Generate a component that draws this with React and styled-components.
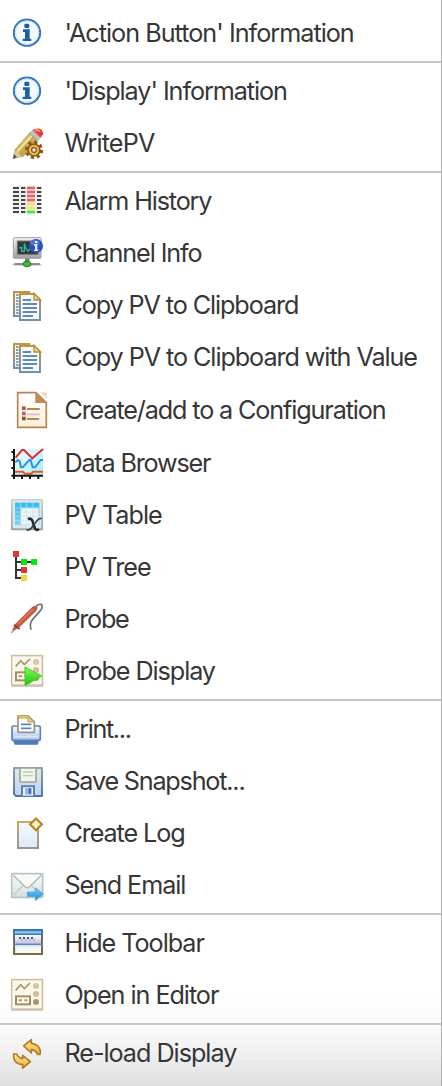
import React from 'react';
import styled, { createGlobalStyle } from 'styled-components';

const GlobalStyle = createGlobalStyle`
  body { margin: 0; background: #fff; }
`;

const Menu = styled.nav`
  box-sizing: border-box;
  width: 442px;
  height: 1086px;
  padding-top: 7px;
  overflow: hidden;
  border-right: 1px solid #afafaf;
  background: linear-gradient(#fff 0, #fff 985px, #fcfcfc 1020px, #f8f8f8 1032px, #efefef 1056px, #dfdfdf 1086px);
  font-family: Inter, "Liberation Sans", sans-serif;
  font-size: 25.2px;
  color: #363636;
`;

const Item = styled.div`
  display: flex;
  align-items: center;
  height: ${(p) => p.$height || 52}px;
  padding-left: 8px;
`;

const Icon = styled.svg`
  flex: none;
  width: 40px;
  height: 36px;
  margin-right: 16.4px;
  overflow: visible;
`;

const Label = styled.span`
  white-space: nowrap;
  line-height: 32px;
  letter-spacing: ${(p) => p.$tracking}px;
`;

const Separator = styled.hr`
  height: 2px;
  margin: 2px 0;
  border: 0;
  background: #c5c5c5;
`;

const Gradient = ({ id, from, to, diagonal }) => (
  <linearGradient id={id} x1="0" y1="0" x2={diagonal ? 1 : 0} y2="1">
    <stop stopColor={from} />
    <stop offset="1" stopColor={to} />
  </linearGradient>
);

const InfoIcon = () => (
  <Icon viewBox="24 45 120 108">
    <circle cx="81" cy="98" r="39.5" fill="#f3fbff" stroke="#3876b8" strokeWidth="6" />
    <circle cx="81" cy="98" r="35" fill="none" stroke="#c9e3f4" strokeWidth="3" />
    <rect x="73" y="71" width="15" height="13" rx="4" fill="#1d5fa5" />
    <path d="M69 88h20v28h5v7H68v-7h7V96h-6z" fill="#1d5fa5" />
  </Icon>
);

const PencilIcon = () => (
  <Icon viewBox="24 375 120 108">
    <Gradient id="pencil" from="#f0d979" to="#a9832b" diagonal />
    <path d="M39 476l6-27 45-51 24 20-43 50z" fill="url(#pencil)" stroke="#a58b45" strokeWidth="2" />
    <path d="M52 455l43-48" stroke="#f5e6a0" strokeWidth="6" />
    <path d="M39 476l5-25 8 4 5 6 7 9z" fill="#d9c7a0" />
    <path d="M39 476l3-14 9 10z" fill="#555" />
    <path d="M88 400l12-11 23 20-10 13z" fill="#bfc0c2" stroke="#999" strokeWidth="2" />
    <path d="M98 391q10-8 22-5q11 6 9 17l-7 10z" fill="#ee3d31" />
    <path d="M105 392q9-4 15 3" stroke="#ff9b8b" strokeWidth="5" fill="none" />
    <circle cx="102" cy="450" r="23" fill="none" stroke="#8a5714" strokeWidth="9" strokeDasharray="9.5 8.56" />
    <circle cx="102" cy="450" r="18" fill="#e9b652" stroke="#8a5714" strokeWidth="5" />
    <circle cx="102" cy="450" r="7" fill="#fff" stroke="#8a5714" strokeWidth="4" />
  </Icon>
);

const alarmRows = [50, 62, 74, 86, 98, 110, 122];
const alarmColors = ['#e06464', '#e06464', '#e06464', '#e06464', '#f0e06c', '#f0e06c', '#38f038'];

const AlarmIcon = () => (
  <Icon viewBox="24 39 120 108">
    <rect x="38" y="48" width="86" height="83" fill="#ededed" />
    {alarmRows.map((y, i) => (
      <React.Fragment key={y}>
        <path d={`M39 ${y + 4}h18M63 ${y + 4}h13M111 ${y + 4}h13`} stroke="#484644" strokeWidth="6" />
        <rect x="81" y={y} width="24" height="8" fill={alarmColors[i]} />
      </React.Fragment>
    ))}
  </Icon>
);

const ChannelIcon = () => (
  <Icon viewBox="24 195 120 108">
    <Gradient id="monitor" from="#f2f2f2" to="#9f9f9f" />
    <ellipse cx="81" cy="284" rx="45" ry="5" fill="#bdbdbd" opacity=".7" />
    <path d="M75 262h13v18H75z" fill="#777" />
    <path d="M42 282h78" stroke="#666" strokeWidth="4" />
    <rect x="40" y="203" width="83" height="62" rx="3" fill="url(#monitor)" stroke="#a0a0a0" strokeWidth="3" />
    <rect x="52" y="213" width="62" height="40" fill="#30383b" stroke="#747474" strokeWidth="3" />
    <path d="M58 234l7-2v12h8v-23l4 13 7 9 7-7" fill="none" stroke="#35b9a0" strokeWidth="4" />
    <ellipse cx="81" cy="282" rx="12" ry="8" fill="#3dbb3d" stroke="#1c8525" strokeWidth="3" />
    <circle cx="108" cy="228" r="21" fill="#2c50bd" />
    <ellipse cx="105" cy="218" rx="14" ry="8" fill="#7896e3" opacity=".55" />
    <path d="M105 213h7v6h-7zM102 222h10v17h3v4h-13v-4h3v-12h-3z" fill="#e6edff" />
  </Icon>
);

const CopyIcon = () => (
  <Icon viewBox="24 351 120 108">
    <Gradient id="copyEdge" from="#bf9744" to="#7390af" />
    <path d="M42 366h46v72H42z" fill="#f5f6f4" stroke="url(#copyEdge)" strokeWidth="6" />
    <path d="M48 375h8M48 384h8M48 393h8M48 402h8M48 411h8M48 420h8M48 429h8" stroke="#6487b7" strokeWidth="5" />
    <path d="M60 372h42l18 18v60H60z" fill="#f7faff" stroke="url(#copyEdge)" strokeWidth="6" />
    <path d="M102 370l20 20h-20z" fill="#efd38a" stroke="#b98d35" strokeWidth="4" />
    <path d="M68 390h25M68 402h43M68 414h43M68 426h43M68 438h31" stroke="#6289bd" strokeWidth="6" />
  </Icon>
);

const ConfigurationIcon = () => (
  <Icon viewBox="24 186 120 108">
    <Gradient id="configPage" from="#fff" to="#f8f1df" />
    <path d="M53 188h55l31 30v74H53z" fill="url(#configPage)" stroke="#b98350" strokeWidth="5" />
    <path d="M106 188l34 31h-34z" fill="#c18a56" />
    <path d="M120 187l21 20v-20z" fill="#eadccf" />
    <path d="M66 229h11v11H66z" fill="#ae5a45" />
    <path d="M66 245h11v11H66z" fill="#b96464" />
    <path d="M66 260h11v11H66z" fill="#91502c" />
    <path d="M83 237h34M83 267h32" stroke="#bb8451" strokeWidth="6" strokeLinecap="round" />
    <path d="M83 253h34" stroke="#e3c7c2" strokeWidth="7" strokeLinecap="round" />
  </Icon>
);

const ChartIcon = () => (
  <Icon viewBox="24 345 120 108">
    <Gradient id="plot" from="#f4ffff" to="#a3f0f6" diagonal />
    <rect x="44" y="356" width="85" height="80" fill="url(#plot)" />
    <path d="M45 425h24l5 6h20l5-6h30" fill="none" stroke="#f25217" strokeWidth="6" />
    <path d="M47 383l19-23h6l25 25 32-28" fill="none" stroke="#ee2635" strokeWidth="6" />
    <path d="M46 397l8-7 5 4 4 18h5l20-22h4l6 22h7l17-22h7" fill="none" stroke="#338ceb" strokeWidth="6" />
    <path d="M42 357v82M34 437h95M34 366h8M34 390h8M34 414h8M42 437v10M66 437v10M90 437v10M115 437v10" fill="none" stroke="#171717" strokeWidth="6" />
  </Icon>
);

const TableIcon = () => (
  <Icon viewBox="24 21 120 108">
    <Gradient id="tableFrame" from="#c6d1d1" to="#93a1a1" />
    <Gradient id="tableFill" from="#36baf3" to="#77d3fa" />
    <rect x="33" y="27" width="96" height="94" rx="3" fill="url(#tableFrame)" />
    <rect x="38" y="31" width="86" height="84" fill="#dfe8e8" />
    <rect x="45" y="38" width="73" height="67" fill="url(#tableFill)" />
    <path d="M63 54h53v50H63z" fill="#eef5f7" />
    <path d="M45 54h72M45 66h72M45 79h72M45 92h72M62 39v65M80 39v65M99 39v65" stroke="#bfe6f5" strokeWidth="2" />
    <path d="M84 88q9-6 13 4l8 24q4 7 12 1" fill="none" stroke="#252b2c" strokeWidth="8" />
    <path d="M125 86q-7-3-14 6l-17 22q-8 9-14 5" fill="none" stroke="#353b3c" strokeWidth="5" />
  </Icon>
);

const TreeIcon = () => (
  <Icon viewBox="24 177 120 108">
    <path d="M48 193v71h22M48 216h48M48 240h22" fill="none" stroke="#333" strokeWidth="6" />
    <path d="M39 183h18v18H39zM63 231h18v18H63z" fill="#dc3838" />
    <path d="M63 207h18v18H63zM93 207h18v18H93z" fill="#00ed0b" />
    <path d="M63 255h18v18H63z" fill="#efd647" />
  </Icon>
);

const ProbeIcon = () => (
  <Icon viewBox="24 333 120 108">
    <path d="M104 355q9-14 20-12q6 9-3 19l-23 26q-12 15-4 31" fill="none" stroke="#6c7171" strokeWidth="5" />
    <path d="M33 429l17-16" stroke="#aaa" strokeWidth="5" />
    <path d="M38 421l8-18 51-51q9-6 13-1t-5 14l-48 47z" fill="#c65b43" stroke="#a94735" strokeWidth="2" />
    <path d="M54 402l46-45" stroke="#d67e62" strokeWidth="4" />
    <path d="M42 405l17 12" stroke="#963b2f" strokeWidth="5" />
  </Icon>
);

const DisplayArt = () => (
  <>
    <rect x="34" y="176" width="96" height="97" rx="3" fill="#d2cdc4" />
    <rect x="35" y="179" width="92" height="88" fill="#fbf7ed" stroke="#cdbd9b" strokeWidth="4" />
    <path d="M47 211l15-17 11 12 17-17" fill="none" stroke="#aa9569" strokeWidth="5" />
    <rect x="48" y="229" width="42" height="24" fill="#fffaf0" stroke="#a68e5e" strokeWidth="6" />
    <path d="M56 241h10M73 241h9" stroke="#aa9569" strokeWidth="6" />
    <circle cx="108" cy="198" r="9" fill="#d7c6a4" />
    <circle cx="108" cy="222" r="9" fill="#d0bc95" />
    <circle cx="108" cy="246" r="9" fill="#aa9567" />
  </>
);

const DisplayIcon = () => <Icon viewBox="24 171 120 108"><DisplayArt /></Icon>;

const ProbeDisplayIcon = () => (
  <Icon viewBox="24 171 120 108">
    <Gradient id="play" from="#87fb54" to="#22bd10" />
    <DisplayArt />
    <path d="M75 213l50 27-50 29z" fill="url(#play)" stroke="#35d51b" strokeWidth="3" />
  </Icon>
);

const PrintIcon = () => (
  <Icon viewBox="24 198 120 108">
    <Gradient id="printer" from="#f7fbff" to="#a8c4ea" />
    <path d="M39 287h78l-4 12H44z" fill="#5179b7" />
    <rect x="36" y="243" width="85" height="43" rx="5" fill="url(#printer)" stroke="#5d80b4" strokeWidth="5" />
    <path d="M54 262v-49h31l18 18v31z" fill="#fff" stroke="#90958a" strokeWidth="5" />
    <path d="M54 212h29l18 19H84v-12H54z" fill="#edd37a" stroke="#c09a3c" strokeWidth="3" />
    <path d="M63 238h31M63 250h31" stroke="#6284b8" strokeWidth="5" />
    <path d="M43 275h71" stroke="#d8e6fa" strokeWidth="4" />
  </Icon>
);

const SaveIcon = () => (
  <Icon viewBox="24 354 120 108">
    <Gradient id="diskEdge" from="#93a39e" to="#4d76b6" />
    <Gradient id="disk" from="#dee9e7" to="#bed3ef" />
    <path d="M42 369h84v84H48l-6-6z" fill="url(#disk)" stroke="url(#diskEdge)" strokeWidth="6" strokeLinejoin="round" />
    <path d="M60 369h48v42H60z" fill="#f3f5e9" stroke="#9ba9a0" strokeWidth="5" />
    <path d="M69 381h30M69 392h30" stroke="#c1c9c1" strokeWidth="4" />
    <path d="M66 452v-28h36v28" fill="#f0f6ff" stroke="#5c80b6" strokeWidth="6" />
    <path d="M75 429h21v20H75z" fill="#9db9e4" />
    <path d="M89 430v16" stroke="#315fae" strokeWidth="6" />
  </Icon>
);

const LogIcon = () => (
  <Icon viewBox="24 30 120 108">
    <Gradient id="logEdge" from="#c8ac62" to="#929994" />
    <Gradient id="logPage" from="#f5faff" to="#dfe8f8" />
    <rect x="54" y="51" width="60" height="78" fill="url(#logPage)" stroke="url(#logEdge)" strokeWidth="6" />
    <path d="M108 40l18 18-18 18-18-18z" fill="#efcf84" stroke="#b08225" strokeWidth="6" />
    <path d="M108 48v20M98 58h20" stroke="#fffbe8" strokeWidth="5" />
  </Icon>
);

const MailIcon = () => (
  <Icon viewBox="24 186 120 108">
    <Gradient id="mail" from="#f9fbf9" to="#d5dfdb" />
    <Gradient id="mailArrow" from="#75caff" to="#258bd6" />
    <rect x="35" y="206" width="93" height="71" rx="2" fill="url(#mail)" stroke="#b4c5c5" strokeWidth="5" />
    <path d="M41 270l29-29M122 270l-29-29" stroke="#c1ceca" strokeWidth="4" />
    <path d="M40 211l36 35q6 5 12 0l36-35" fill="#f7faf7" stroke="#a9b9b5" strokeWidth="4" />
    <path d="M82 261h24v-13l24 19-24 20v-13H82z" fill="url(#mailArrow)" stroke="#4099dc" strokeWidth="2" />
  </Icon>
);

const ToolbarIcon = () => (
  <Icon viewBox="24 15 120 108">
    <Gradient id="toolbarEdge" from="#6267a1" to="#806a35" />
    <Gradient id="toolbarFill" from="#fff" to="#c4c4e8" />
    <rect x="42" y="30" width="84" height="72" fill="#fff" stroke="url(#toolbarEdge)" strokeWidth="6" />
    <path d="M39 27h90v18H39z" fill="#3f76b6" />
    <path d="M45 37h78" stroke="#82cceb" strokeWidth="7" />
    <path d="M45 45h78v24H45z" fill="url(#toolbarFill)" />
    <path d="M39 73h90" stroke="#777cac" strokeWidth="6" />
    <path d="M57 51h6v6h-6zM69 51h6v6h-6zM81 51h6v6h-6zM93 51h6v6h-6z" fill="#345b88" />
    <path d="M63 57h6v6h-6zM75 57h6v6h-6zM87 57h6v6h-6zM99 57h6v6h-6z" fill="#b7b9cf" />
    <path d="M45 78h78v20H45z" fill="#f3fafe" />
    <path d="M46 78h77M47 78v20" stroke="#d0e9f8" strokeWidth="4" />
  </Icon>
);

const ReloadIcon = () => (
  <Icon viewBox="24 345 120 108">
    <Gradient id="reload" from="#ffe8a3" to="#e5ae42" />
    <path d="M71 378l23-19v11q24 3 27 24l-1 9h-8q-4-12-18-14v10z" fill="url(#reload)" stroke="#b47b18" strokeWidth="5" strokeLinejoin="round" />
    <path d="M91 425l-23 19v-10q-24-2-27-22v-10h9q4 11 18 14v-10z" fill="url(#reload)" stroke="#b47b18" strokeWidth="5" strokeLinejoin="round" />
  </Icon>
);

const groups = [
  [{ label: "'Action Button' Information", icon: InfoIcon, tracking: -0.99 }],
  [
    { label: "'Display' Information", icon: InfoIcon, tracking: -1.07 },
    { label: 'WritePV', icon: PencilIcon, tracking: -0.87 },
  ],
  [
    { label: 'Alarm History', icon: AlarmIcon, tracking: -1.15 },
    { label: 'Channel Info', icon: ChannelIcon, tracking: -1.1 },
    { label: 'Copy PV to Clipboard', icon: CopyIcon, tracking: -1.1 },
    { label: 'Copy PV to Clipboard with Value', icon: CopyIcon, tracking: -1.07 },
    { label: 'Create/add to a Configuration', icon: ConfigurationIcon, tracking: -1.13, height: 54 },
    { label: 'Data Browser', icon: ChartIcon, tracking: -1.18 },
    { label: 'PV Table', icon: TableIcon, tracking: -1.0 },
    { label: 'PV Tree', icon: TreeIcon, tracking: -1.1 },
    { label: 'Probe', icon: ProbeIcon, tracking: -1.25 },
    { label: 'Probe Display', icon: ProbeDisplayIcon, tracking: -1.07 },
  ],
  [
    { label: 'Print...', icon: PrintIcon, tracking: -1.34 },
    { label: 'Save Snapshot...', icon: SaveIcon, tracking: -1.2 },
    { label: 'Create Log', icon: LogIcon, tracking: -1.1 },
    { label: 'Send Email', icon: MailIcon, tracking: -1.1 },
  ],
  [
    { label: 'Hide Toolbar', icon: ToolbarIcon, tracking: -1.03 },
    { label: 'Open in Editor', icon: DisplayIcon, tracking: -1.05 },
  ],
  [{ label: 'Re-load Display', icon: ReloadIcon, tracking: -1.02 }],
];

export default function App() {
  return (
    <>
      <GlobalStyle />
      <Menu>
        {groups.map((items, index) => (
          <React.Fragment key={items[0].label}>
            {index > 0 && <Separator />}
            {items.map(({ label, icon: ItemIcon, tracking, height }) => (
              <Item key={label} $height={height}>
                <ItemIcon />
                <Label $tracking={tracking}>{label}</Label>
              </Item>
            ))}
          </React.Fragment>
        ))}
      </Menu>
    </>
  );
}
